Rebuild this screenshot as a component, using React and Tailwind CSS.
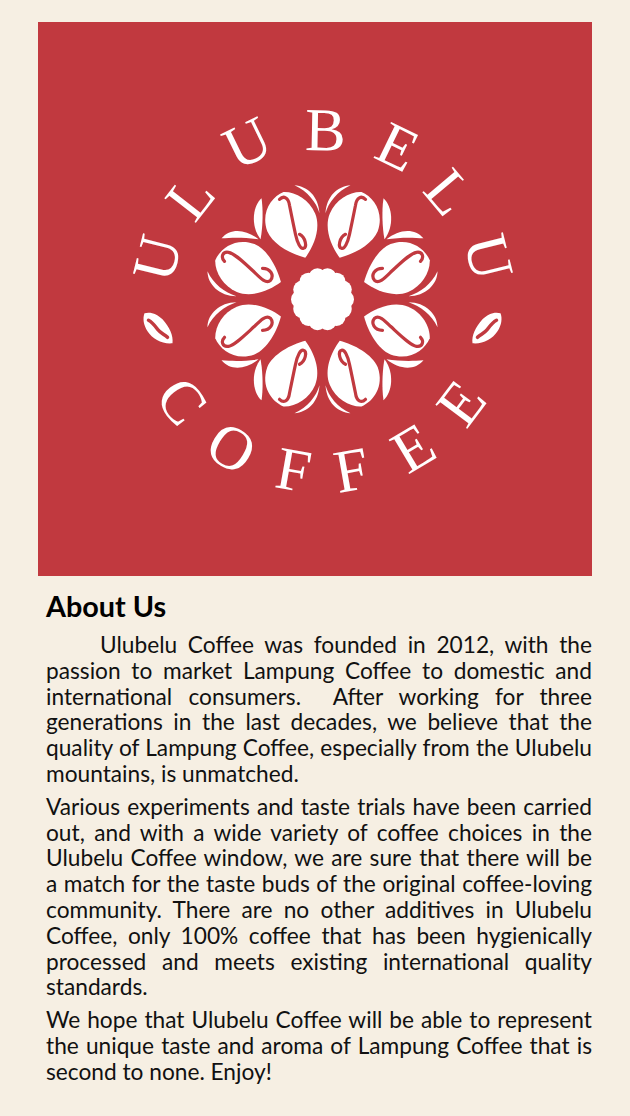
import React from 'react';

const BEAN_A = 'M0,-45 C-12,-52 -26,-66 -26,-82 C-26,-97 -16,-110 -5,-114 C8,-114 24,-104 25,-84 C25,-70 12,-54 0,-45Z';
const BEAN_B = 'M0,-45 C12,-52 26,-66 26,-82 C26,-97 16,-110 5,-114 C-8,-114 -24,-104 -25,-84 C-25,-70 -12,-54 0,-45Z';

// one quarter of the flower, the other three are mirrored
function Quarter({ flip }) {
  return (
    <g transform={flip}>
      <path d={BEAN_A} fill="white" transform="rotate(22.5)" />
      <path d={BEAN_B} fill="white" transform="rotate(67.5)" />
      <path d="M43,-100 C39,-104 34,-102 33,-94 C31,-84 29,-74 27,-65 C25,-56 22,-50 19,-51 C15,-52 17,-62 23,-65" fill="none" stroke="#c1393f" strokeWidth="3.2" strokeLinecap="round" />
      <path d="M98,-38 C102,-42 100,-48 94,-47 C88,-46 80,-38 68,-27 C62,-21 56,-15 52,-19 C48,-24 52,-31 60,-31" fill="none" stroke="#c1393f" strokeWidth="3.2" strokeLinecap="round" />
      <path d="M28,-114 C15,-113 4,-103 3,-86 C6,-97 15,-108 28,-114Z" fill="white" />
      <path d="M61,-101 C70,-93 72,-73 62,-60 C60,-70 59,-88 61,-101Z" fill="white" />
      <path d="M101,-61 C92,-72 76,-70 64,-60 C76,-62 90,-62 101,-61Z" fill="white" />
      <path d="M115,-28 C115,-15 103,-3 86,-3 C98,-7 109,-15 115,-28Z" fill="white" />
    </g>
  );
}

function SideBean({ flip }) {
  return (
    <g transform={flip}>
      <path d="M-178,14 C-172,12 -165,15 -160,20 C-153,28 -149,36 -150,44 C-160,45 -170,40 -175,32 C-179,26 -180,19 -178,14Z" fill="white" />
      <path d="M-174,21 C-170,23 -168,26 -165,30 C-162,34 -158,35 -155,38" fill="none" stroke="#c1393f" strokeWidth="3.5" strokeLinecap="round" />
    </g>
  );
}

const LETTERS = [
  ['U', -165, -41, -76],
  ['L', -132, -102, -52],
  ['U', -75, -156, -26],
  ['B', 3, -169, 1],
  ['E', 75, -152, 26],
  ['L', 126, -107, 50],
  ['U', 166, -42, 76],
  ['C', -141, 102, 52],
  ['O', -91, 149, 31],
  ['F', -29, 171, 10],
  ['F', 29, 171, -10],
  ['E', 91, 149, -31],
  ['E', 139, 104, -53],
];

const SCALLOPS = Array.from({ length: 14 }, (_, i) => (i * Math.PI * 2) / 14);

function Logo() {
  return (
    <svg viewBox="0 0 554 554" className="block w-[554px] h-[554px] bg-[#c1393f]">
      <g transform="translate(284.5 277.3)">
        <Quarter flip="scale(1 1)" />
        <Quarter flip="scale(-1 1)" />
        <Quarter flip="scale(1 -1)" />
        <Quarter flip="scale(-1 -1)" />
        <circle r="25" fill="white" />
        {SCALLOPS.map((a) => (
          <circle key={a} cx={Math.cos(a) * 22.5} cy={Math.sin(a) * 22.5} r="9" fill="white" />
        ))}
        <SideBean flip="scale(1 1)" />
        <SideBean flip="scale(-1 1)" />
        {LETTERS.map(([ch, x, y, rot], i) => (
          <text
            key={i}
            transform={`translate(${x} ${y}) rotate(${rot})`}
            y="20"
            textAnchor="middle"
            fill="white"
            fontSize="61"
            fontFamily="'Liberation Serif', serif"
          >
            {ch}
          </text>
        ))}
      </g>
    </svg>
  );
}

export default function App() {
  return (
    <div className="min-h-[1116px] bg-[#f6efe3] pt-[22px] pl-[38px] pr-[38px] font-['Lato',sans-serif] text-[#111]">
      <Logo />
      <div className="pl-2 pt-[13px]">
        <h2 className="text-[28.8px] leading-[34px] font-bold text-black">About Us</h2>
        <p className="mt-[9px] text-[22.7px] leading-[25.8px] text-justify indent-[54px]">
          Ulubelu Coffee was founded in 2012, with the passion to market Lampung Coffee to domestic and international consumers.&nbsp; After working for three generations in the last decades, we believe that the quality of Lampung Coffee, especially from the Ulubelu mountains, is unmatched.
        </p>
        <p className="mt-[7px] text-[22.7px] leading-[25.8px] text-justify">
          Various experiments and taste trials have been carried out, and with a wide variety of coffee choices in the Ulubelu Coffee window, we are sure that there will be a match for the taste buds of the original coffee-loving community. There are no other additives in Ulubelu Coffee, only 100% coffee that has been hygienically processed and meets existing international quality standards.
        </p>
        <p className="mt-[7px] text-[22.7px] leading-[25.8px] text-justify">
          We hope that Ulubelu Coffee will be able to represent the unique taste and aroma of Lampung Coffee that is second to none. Enjoy!
        </p>
      </div>
    </div>
  );
}
